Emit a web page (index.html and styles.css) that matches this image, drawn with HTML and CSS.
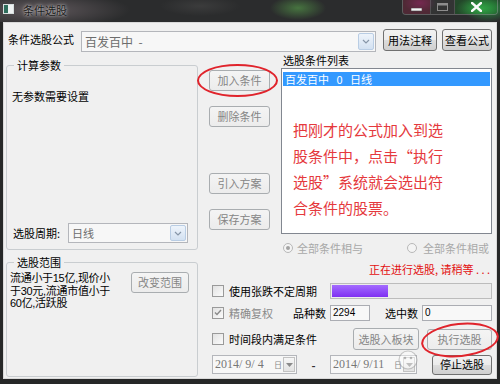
FILE: index.html
```html
<!DOCTYPE html>
<html>
<head>
<meta charset="utf-8">
<link rel="stylesheet" href="styles.css">
</head>
<body>
<div class="window">
  <div class="titlebar">
    <span class="appicon"></span>
    <span class="title">条件选股</span>
    <div class="wctrls">
      <span class="wbtn wmin"><svg width="11" height="4" viewBox="0 0 11 4"><rect x="0" y="0" width="11" height="3" fill="#f4f4f4" stroke="#444" stroke-width="0.6"/></svg></span>
      <span class="wbtn wmax"><svg width="11" height="8" viewBox="0 0 11 8"><rect x="0.5" y="0.5" width="10" height="7" fill="none" stroke="#8d8d8d" stroke-width="1"/><rect x="0.5" y="0.5" width="10" height="2" fill="#8d8d8d"/></svg></span>
      <span class="wbtn wclose"><svg width="11" height="10" viewBox="0 0 11 10"><path d="M1 1 L10 9 M10 1 L1 9" stroke="#fafafa" stroke-width="2.4" stroke-linecap="square"/></svg></span>
    </div>
  </div>

  <div class="client">
    <div class="toprow">
      <span class="formula-lbl">条件选股公式</span>
      <div class="combo formula-combo">
        <span class="combo-text">百发百中  -</span>
        <span class="combo-btn"><svg width="8" height="5" viewBox="0 0 8 5"><path d="M1 1 L4 4 L7 1" fill="none" stroke="#8796a8" stroke-width="1.2"/></svg></span>
      </div>
      <button class="btn btn-usage">用法注释</button>
      <button class="btn btn-view">查看公式</button>
    </div>

    <div class="body">
      <div class="leftcol">
        <fieldset class="group g-params">
          <legend>计算参数</legend>
          <div class="params-body">
            <div class="noparam">无参数需要设置</div>
            <div class="period-row">
              <span class="period-lbl">选股周期:</span>
              <div class="combo period-combo">
                <span class="combo-text">日线</span>
                <span class="combo-btn"><svg width="8" height="5" viewBox="0 0 8 5"><path d="M1 1 L4 4 L7 1" fill="none" stroke="#8796a8" stroke-width="1.2"/></svg></span>
              </div>
            </div>
          </div>
        </fieldset>
        <fieldset class="group g-range">
          <legend>选股范围</legend>
          <div class="range-body">
            <div class="range-text">流通小于15亿,现价小<br>于30元,流通市值小于<br>60亿,活跃股</div>
            <button class="btn dis btn-range">改变范围</button>
          </div>
        </fieldset>
      </div>

      <div class="rightcol">
        <div class="upper">
          <div class="btncol">
            <button class="btn dis b-add">加入条件</button>
            <button class="btn dis b-del">删除条件</button>
            <button class="btn dis b-imp">引入方案</button>
            <button class="btn dis b-save">保存方案</button>
          </div>
          <div class="listwrap">
            <div class="listlbl">选股条件列表</div>
            <div class="listbox">
              <div class="sel">百发百中   0   日线</div>
              <div class="note">把刚才的公式加入到选<br>股条件中，点击“执行<br>选股”系统就会选出符<br>合条件的股票。</div>
            </div>
          </div>
        </div>

        <div class="radiorow">
          <span class="ritem r1"><span class="radio on"></span><span class="rtext">全部条件相与</span></span>
          <span class="ritem r2"><span class="radio"></span><span class="rtext">全部条件相或</span></span>
        </div>

        <div class="status">正在进行选股, 请稍等 . . .</div>

        <div class="ctlrow rowA">
          <span class="chk w118"><span class="cb"></span><span>使用张跌不定周期</span></span>
          <div class="prog"><div class="fill" style="width:56px"></div></div>
        </div>
        <div class="ctlrow rowB">
          <span class="chk w81 grey"><span class="cb"><svg width="8" height="7" viewBox="0 0 8 7"><path d="M1 3.5 L3 5.5 L7 1" fill="none" stroke="#8a8a8a" stroke-width="1.4"/></svg></span><span>精确复权</span></span>
          <span class="flbl w37">品种数</span>
          <span class="numbox nb1">2294</span>
          <span class="flbl w37 ml15">选中数</span>
          <span class="numbox nb2">0</span>
        </div>
        <div class="ctlrow rowC">
          <span class="chk w141"><span class="cb"></span><span>时间段内满足条件</span></span>
          <button class="btn dis b-board">选股入板块</button>
          <button class="btn dis b-run">执行选股</button>
        </div>
        <div class="ctlrow rowD">
          <div class="dp dp1"><span class="dp-text">2014/ 9/ 4</span><span class="dp-day">日</span><span class="dp-btn"><svg width="7" height="4" viewBox="0 0 7 4"><path d="M0 0 L7 0 L3.5 4 Z" fill="#8a8a8a"/></svg></span></div>
          <span class="dash">-</span>
          <div class="dp dp2"><span class="dp-text">2014/ 9/11</span><span class="dp-day">日</span><span class="dp-btn"><svg width="7" height="4" viewBox="0 0 7 4"><path d="M0 0 L7 0 L3.5 4 Z" fill="#8a8a8a"/></svg></span></div>
          <button class="btn b-stop">停止选股</button>
        </div>
      </div>
    </div>
  </div>

  <div class="ellipse e1"></div>
  <div class="ellipse e2"></div>
  <div class="wm">
    <svg width="20" height="20" viewBox="0 0 20 20"><circle cx="10" cy="10" r="9" fill="rgba(255,255,255,0.45)" stroke="rgba(150,150,150,0.5)" stroke-width="1.2"/><circle cx="7" cy="8" r="1.3" fill="rgba(140,140,140,0.6)"/><circle cx="13" cy="8" r="1.3" fill="rgba(140,140,140,0.6)"/></svg>
  </div>
</div>
</body>
</html>
```

FILE: styles.css
```css
* { box-sizing: border-box; }
html, body { margin: 0; padding: 0; }
body {
  width: 500px; height: 384px; overflow: hidden;
  background: #232424;
  font-family: "Noto Sans CJK SC", "Noto Sans", sans-serif;
  font-size: 11px; color: #000;
}
.window {
  position: relative; width: 500px; height: 384px;
  display: flex; flex-direction: column;
  background: #262727;
}

/* title bar */
.titlebar {
  height: 22px; flex: none;
  display: flex; align-items: flex-start;
  background:
    radial-gradient(ellipse 28px 12px at 298px 8px, rgba(80,140,70,0.75), transparent),
    radial-gradient(ellipse 16px 9px at 420px 3px, rgba(160,40,130,0.7), transparent),
    radial-gradient(ellipse 26px 14px at 488px 8px, rgba(40,160,70,0.85), transparent),
    radial-gradient(ellipse 90px 18px at 40px 10px, rgba(110,100,105,0.8), transparent),
    radial-gradient(ellipse 40px 10px at 200px 6px, rgba(70,70,70,0.6), transparent),
    #2b2c2d;
}
.appicon {
  width: 11px; height: 10px; margin: 4px 0 0 3px;
  border: 1px solid #d6dede;
  background: linear-gradient(90deg, #2e6d5c 0 45%, #eef2f2 45%);
}
.title {
  margin: 3px 0 0 9px; line-height: 14px; font-size: 11px;
  color: #1b1b1b;
  text-shadow: 0 0 4px rgba(255,255,255,0.6), 0 0 2px rgba(255,255,255,0.5);
}
.wctrls {
  margin-left: auto; margin-right: 2px;
  display: flex; height: 15px;
  border: 1px solid rgba(190,190,190,0.35); border-top: none;
  border-radius: 0 0 4px 4px; overflow: hidden;
}
.wbtn { display: flex; align-items: center; justify-content: center; height: 14px; }
.wmin { width: 27px; background: rgba(110,40,60,0.55); padding-top: 5px; }
.wmax { width: 25px; background: rgba(60,60,60,0.5); border-left: 1px solid rgba(150,150,150,0.3); border-right: 1px solid rgba(150,150,150,0.3); }
.wclose { width: 42px; background: radial-gradient(ellipse 24px 12px at 60% 60%, rgba(50,170,70,0.9), rgba(30,90,40,0.6)); }

/* client */
.client {
  margin: 0 3px; height: 357px; flex: none;
  background: #f0f0f0;
  border: 1px solid #d9d9d9;
  display: flex; flex-direction: column;
}
.toprow { display: flex; align-items: flex-start; margin-top: 6px; padding-left: 4px; height: 23px; }
.formula-lbl { width: 73px; line-height: 13px; margin-top: 4px; }
.combo {
  display: flex; border: 1px solid #b4b6bb; background: #f7f7f7;
}
.combo-text { flex: 1; padding-left: 3px; color: #6d6d6d; white-space: pre; display: flex; align-items: center; }
.combo-btn {
  width: 16px; margin: 1px;
  background: linear-gradient(#eef4fb, #d3e1f1);
  border: 1px solid #b9cde4; border-radius: 2px;
  display: flex; align-items: center; justify-content: center;
}
.formula-combo { width: 295px; height: 21px; margin-top: 2px; }
.formula-combo .combo-text { font-size: 12px; }

.btn {
  font-family: inherit; font-size: 11px; padding: 0; margin: 0;
  border: 1px solid #707070; border-radius: 3px;
  background: linear-gradient(#f2f2f2 0%, #ebebeb 50%, #dddddd 51%, #cfcfcf 100%);
  color: #000; line-height: 1;
  display: flex; align-items: center; justify-content: center;
}
.btn.dis {
  border-color: #a9adb0; color: #858585;
  background: linear-gradient(#f4f4f4, #ececec);
}
.btn-usage { width: 54px; height: 22px; margin-left: 7px; }
.btn-view { width: 50px; height: 22px; margin-left: 5px; }

.body { display: grid; grid-template-columns: 192px 298px; padding-left: 2px; }

/* group boxes */
.group {
  margin: 0; padding: 0 4px 0 5px; min-width: 0;
  border: 1px solid #c9cdd0; border-radius: 3px;
}
.group legend { padding: 0 3px; margin-left: 2px; line-height: 13px; font-size: 11px; }
.g-params { margin-top: 7px; height: 191px; }
.params-body { height: 177px; display: flex; flex-direction: column; }
.noparam { margin-top: 18px; line-height: 13px; }
.period-row { margin-top: auto; margin-bottom: 6px; display: flex; align-items: center; padding-left: 1px; }
.period-lbl { width: 55px; }
.period-combo { width: 120px; height: 20px; }

.g-range { margin-top: 6px; height: 121px; }
.range-body { display: flex; align-items: flex-start; }
.range-text {
  margin-top: 3px; margin-left: -2px; width: 121px;
  font-family: "Liberation Sans", "Noto Sans CJK SC", sans-serif;
  line-height: 12.6px; white-space: nowrap; letter-spacing: -0.3px;
}
.btn-range { width: 58px; height: 21px; margin-top: 3px; }

/* right column */
.upper { display: flex; }
.btncol { width: 61px; margin-left: 11px; display: flex; flex-direction: column; }
.btncol .btn { height: 21px; }
.b-add { margin-top: 18px; }
.b-del { margin-top: 15px; }
.b-imp { margin-top: 46px; }
.b-save { margin-top: 15px; }
.listwrap { margin-left: 11px; width: 211px; }
.listlbl { margin-top: 2px; line-height: 13px; padding-left: 2px; }
.listbox {
  margin-top: 1px; height: 166px;
  border: 1px solid #828790; background: #fff;
  padding: 3px 1px 0 1px;
}
.sel { height: 14px; line-height: 14px; background: #3399ff; color: #fff; padding-left: 2px; white-space: pre; }
.note { margin-top: 31px; padding-left: 10px; font-size: 15px; line-height: 26px; color: #e5393d; white-space: nowrap; }

.radiorow { display: flex; align-items: center; height: 13px; margin-top: 7px; padding-left: 85px; }
.ritem { display: flex; align-items: center; }
.r1 { width: 124px; }
.radio {
  width: 10px; height: 10px; border-radius: 50%;
  border: 1px solid #b8b8b8; background: #f4f4f4;
  display: flex; align-items: center; justify-content: center;
}
.radio.on::after { content: ""; width: 4px; height: 4px; border-radius: 50%; background: #a2a2a2; }
.rtext { color: #a8a8a8; margin-left: 4px; }
.r2 .rtext { margin-left: 6px; }

.status { margin-top: 9px; line-height: 13px; text-align: right; padding-right: 6px; color: #e30f0f; white-space: pre; }

.ctlrow { display: flex; align-items: center; margin-left: 14px; }
.rowA { margin-top: 7px; height: 16px; }
.rowB { margin-top: 5px; height: 17px; }
.rowC { margin-top: 7px; height: 22px; }
.rowD { margin-top: 4px; height: 21px; }
.chk { display: flex; align-items: center; gap: 5px; white-space: nowrap; }
.chk.grey { color: #8a8a8a; }
.w118 { width: 118px; }
.w81 { width: 81px; }
.w141 { width: 141px; }
.w37 { width: 37px; }
.ml15 { margin-left: 15px; }
.cb {
  width: 12px; height: 12px; flex: none;
  border: 1px solid #9a9a9a;
  background: linear-gradient(135deg, #e2e2e2, #fbfbfb);
  display: flex; align-items: center; justify-content: center;
}
.prog { width: 162px; height: 16px; border: 1px solid #bcbcbc; background: #ececec; padding: 1px; }
.fill { height: 100%; background: linear-gradient(#a46cff, #7f30f2); }
.flbl { white-space: nowrap; }
.numbox {
  height: 16px; border: 1px solid #abadb3; background: #f8f8f8;
  font-family: "Liberation Sans", sans-serif; font-size: 10px;
  padding-left: 2px; display: flex; align-items: center;
}
.nb1 { width: 40px; }
.nb2 { width: 70px; }
.b-board { width: 66px; height: 22px; }
.b-run { width: 65px; height: 21px; margin-left: 8px; }

.dp {
  display: flex; align-items: center; height: 19px;
  border: 1px solid #b4b6bb; background: #f7f7f7;
}
.dp1 { width: 85px; }
.dp2 { width: 87px; }
.dp-text { font-family: "Liberation Serif", serif; font-size: 12px; color: #777; padding-left: 2px; white-space: pre; }
.dp-day { margin-left: auto; color: #888; font-size: 8px; line-height: 9px; }
.dp-btn {
  width: 12px; height: 15px; margin: 0 1px 0 1px;
  border: 1px solid #c2c2c2; background: linear-gradient(#f6f6f6, #e3e3e3);
  display: flex; align-items: center; justify-content: center;
}
.dash { width: 33px; text-align: center; font-weight: bold; color: #333; }
.b-stop { width: 60px; height: 20px; margin-left: 15px; }

/* annotations overlay */
.ellipse { position: absolute; border: 2px solid #e0242c; border-radius: 50%; }
.e1 { left: 197px; top: 64px; width: 81px; height: 33px; }
.e2 { left: 421px; top: 323px; width: 78px; height: 34px; transform: rotate(-6deg); }
.wm { position: absolute; left: 398px; top: 350px; display: flex; pointer-events: none; }
```
